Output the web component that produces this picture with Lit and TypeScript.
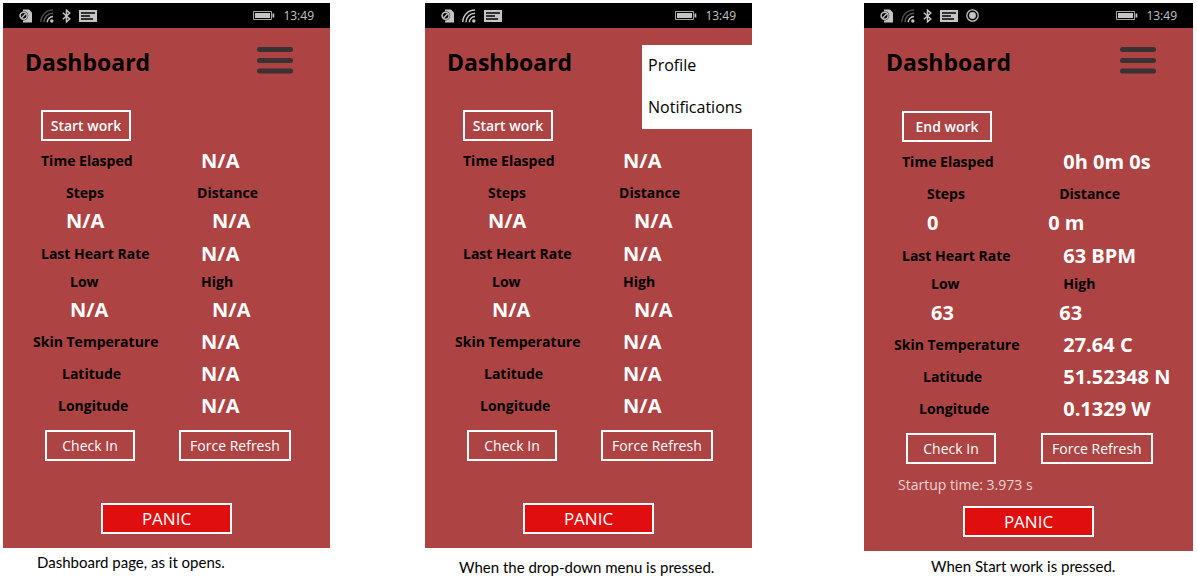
import { LitElement, html, svg, css, nothing } from "lit";
import { customElement, property } from "lit/decorators.js";
import { classMap } from "lit/directives/class-map.js";

interface Cell {
  text: string;
  indent: string;
}

interface Readings {
  elapsed: Cell;
  steps: Cell;
  distance: Cell;
  heart: Cell;
  low: Cell;
  high: Cell;
  skin: Cell;
  latitude: Cell;
  longitude: Cell;
}

const cell = (text: string, indent: string): Cell => ({ text, indent });

const EMPTY: Readings = {
  elapsed: cell("N/A", "r2"),
  steps: cell("N/A", "l4"),
  distance: cell("N/A", "r3"),
  heart: cell("N/A", "r2"),
  low: cell("N/A", "l5"),
  high: cell("N/A", "r3"),
  skin: cell("N/A", "r2"),
  latitude: cell("N/A", "r2"),
  longitude: cell("N/A", "r2"),
};

const LIVE: Readings = {
  elapsed: cell("0h 0m 0s", "r2"),
  steps: cell("0", "l4"),
  distance: cell("0 m", "r0"),
  heart: cell("63 BPM", "r2"),
  low: cell("63", "l5"),
  high: cell("63", "r1"),
  skin: cell("27.64 C", "r2"),
  latitude: cell("51.52348 N", "r2"),
  longitude: cell("0.1329 W", "r2"),
};

const simIcon = svg`
  <svg width="13" height="14" viewBox="0 0 13 14" aria-hidden="true">
    <path d="M4 .5h6l3 3v10H4z" fill="#c4c4c4"/>
    <circle cx="4.600" cy="6.800" r="4.600" fill="#000"/>
    <circle cx="4.600" cy="6.800" r="3.500" fill="none" stroke="#c4c4c4" stroke-width="1.500"/>
    <path d="M2.500 8.900 6.700 4.700" stroke="#c4c4c4" stroke-width="1.400"/>
  </svg>`;

const wifiIcon = (strong: boolean) => svg`
  <svg width="14" height="14" viewBox="0 0 14 14" fill="none" stroke-width="1.500" aria-hidden="true">
    <path d="M.8 13A12.200 12.200 0 0 1 13 .9" stroke=${strong ? "#c4c4c4" : "#4a4a4a"}/>
    <path d="M4 13.200A9 9 0 0 1 13 4.200" stroke=${strong ? "#c4c4c4" : "#5a5a5a"}/>
    <path d="M7.300 13.200A5.800 5.800 0 0 1 13 7.500" stroke="#c4c4c4"/>
    <circle cx="11.800" cy="12" r="1.700" fill="#c4c4c4"/>
  </svg>`;

const bluetoothIcon = svg`
  <svg width="9" height="14" viewBox="0 0 9 14" fill="none" stroke="#c4c4c4" stroke-width="1.500" aria-hidden="true">
    <path d="M.8 3.800 7.800 10 4.500 12.800V1.200L7.800 4 .8 10.200"/>
  </svg>`;

const messageIcon = svg`
  <svg width="18" height="12" viewBox="0 0 18 12" aria-hidden="true">
    <path d="M0 0h18v12H0z" fill="#c4c4c4"/>
    <path d="M2 3h14M2 6h9M2 9h12" stroke="#000" stroke-width="1.300"/>
  </svg>`;

const recordIcon = svg`
  <svg width="13" height="13" viewBox="0 0 13 13" aria-hidden="true">
    <circle cx="6.500" cy="6.500" r="5.700" fill="none" stroke="#c4c4c4" stroke-width="1.300"/>
    <circle cx="6.500" cy="6.500" r="3.400" fill="#c4c4c4"/>
  </svg>`;

const batteryIcon = svg`
  <svg width="22" height="9" viewBox="0 0 22 9" aria-hidden="true">
    <path d="M.5.5h18v8H.5z" fill="none" stroke="#a8a8a8"/>
    <path d="M2 2h15v5H2z" fill="#c4c4c4"/>
    <path d="M19.500 2.500h1.800v4h-1.800z" fill="#c4c4c4"/>
  </svg>`;

@customElement("phone-dashboard")
export class PhoneDashboard extends LitElement {
  @property({ type: Boolean }) working = false;
  @property({ type: Boolean }) menuOpen = false;
  @property({ type: Boolean }) bluetooth = false;
  @property({ attribute: false }) readings: Readings = EMPTY;

  static styles = css`
    :host {
      display: block;
      font-family: "Open Sans", "Noto Sans", sans-serif;
    }
    .phone {
      --value-row: 28px;
      --top-gap: 14px;
      position: relative;
      display: flex;
      flex-direction: column;
      padding-bottom: 14px;
      background: #ad4343;
      color: #000;
    }
    .phone.working {
      --value-row: 29px;
      --top-gap: 15px;
    }
    .status {
      display: flex;
      align-items: center;
      justify-content: space-between;
      height: 25px;
      padding: 0 16px;
      background: #000;
      color: #c4c4c4;
      font-size: 12px;
    }
    .icons {
      display: flex;
      align-items: center;
      gap: 8px;
    }
    .icons svg {
      display: block;
    }
    .header {
      display: flex;
      align-items: center;
      justify-content: space-between;
      height: 68px;
      padding: 0 37px 0 22px;
    }
    h1 {
      margin: 0;
      font-size: 23px;
      line-height: 32px;
      font-weight: 700;
    }
    button {
      box-sizing: border-box;
      margin: 0;
      padding: 0;
      font: inherit;
      cursor: pointer;
    }
    .burger {
      border: 0;
      background: none;
      padding-bottom: 4px;
    }
    .burger svg {
      display: block;
    }
    .menu {
      position: absolute;
      top: 42px;
      right: 0;
      display: flex;
      flex-direction: column;
      width: 110px;
      background: #fff;
    }
    .menu button {
      height: 42px;
      padding: 0 6px 2px;
      border: 0;
      background: none;
      color: #000;
      font-size: 16px;
      line-height: 24px;
      text-align: left;
      white-space: nowrap;
    }
    .outline {
      height: 31px;
      border: 2px solid #fff;
      background: none;
      color: #fff;
      font-size: 14px;
      white-space: nowrap;
    }
    .short {
      width: 90px;
    }
    .long {
      width: 112px;
    }
    .shift {
      display: flex;
      padding: var(--top-gap) 0 6px 38px;
    }
    .shift .outline {
      font-weight: 600;
    }
    .readings {
      display: flex;
      flex-direction: column;
      gap: 4px;
      margin: 0;
    }
    .row {
      display: grid;
      grid-template-columns: 56% 44%;
      grid-auto-rows: 28px;
      align-items: center;
    }
    .pair {
      grid-template-rows: 28px var(--value-row);
    }
    .heart {
      grid-template-rows: 29px 28px var(--value-row);
    }
    dt,
    dd {
      margin: 0;
      white-space: nowrap;
    }
    dt {
      font-size: 14px;
      line-height: 20px;
      font-weight: 700;
    }
    dd {
      color: #fff;
      font-size: 20px;
      line-height: 28px;
      font-weight: 700;
    }
    .l0 { padding-left: 30px; }
    .l1 { padding-left: 38px; }
    .l2 { padding-left: 55px; }
    .l3 { padding-left: 59px; }
    .l4 { padding-left: 63px; }
    .l5 { padding-left: 67px; }
    .r0 { padding-left: 0; }
    .r1 { padding-left: 11px; }
    .r2 { padding-left: 15px; }
    .r3 { padding-left: 26px; }
    .actions {
      display: grid;
      grid-template-columns: 47% 1fr;
      padding: 10px 0 0 42px;
    }
    .startup {
      height: 22px;
      margin: 10px 0;
      padding-left: 34px;
      color: #ecd5d5;
      font-size: 14px;
      line-height: 22px;
    }
    .panic {
      align-self: center;
      width: 40%;
      height: 31px;
      border: 2px solid #fff;
      background: #e00e0e;
      color: #fff;
      font-size: 17px;
      line-height: 24px;
    }
  `;

  private label(text: string, indent: string) {
    return html`<dt class=${indent}>${text}</dt>`;
  }

  private value(c: Cell) {
    return html`<dd class=${c.indent}>${c.text}</dd>`;
  }

  render() {
    const r = this.readings;
    return html`
      <section class=${classMap({ phone: true, working: this.working })}>
        <div class="status">
          <div class="icons">
            ${simIcon} ${wifiIcon(!this.bluetooth)}
            ${this.bluetooth ? bluetoothIcon : nothing} ${messageIcon}
            ${this.working ? recordIcon : nothing}
          </div>
          <div class="icons">${batteryIcon}<span>13:49</span></div>
        </div>
        <header class="header">
          <h1>Dashboard</h1>
          <button
            class="burger"
            aria-label="Menu"
            aria-expanded=${this.menuOpen}
            @click=${() => (this.menuOpen = !this.menuOpen)}
          >
            <svg width="36" height="27" viewBox="0 0 36 27" stroke="#3a3133" stroke-width="5" stroke-linecap="round">
              <path d="M2.500 2.500h31M2.500 13.500h31M2.500 24h31" />
            </svg>
          </button>
        </header>
        ${this.menuOpen
          ? html`<nav class="menu">
              <button>Profile</button>
              <button>Notifications</button>
            </nav>`
          : nothing}
        <div class="shift">
          <button class="outline short">${this.working ? "End work" : "Start work"}</button>
        </div>
        <dl class="readings">
          <div class="row">${this.label("Time Elasped", "l1")}${this.value(r.elapsed)}</div>
          <div class="row pair">
            ${this.label("Steps", "l4")}${this.label("Distance", "r1")}
            ${this.value(r.steps)}${this.value(r.distance)}
          </div>
          <div class="row heart">
            ${this.label("Last Heart Rate", "l1")}${this.value(r.heart)}
            ${this.label("Low", "l5")}${this.label("High", "r2")}
            ${this.value(r.low)}${this.value(r.high)}
          </div>
          <div class="row">${this.label("Skin Temperature", "l0")}${this.value(r.skin)}</div>
          <div class="row">${this.label("Latitude", "l3")}${this.value(r.latitude)}</div>
          <div class="row">${this.label("Longitude", "l2")}${this.value(r.longitude)}</div>
        </dl>
        <div class="actions">
          <div><button class="outline short">Check In</button></div>
          <div><button class="outline long">Force Refresh</button></div>
        </div>
        <div class="startup">${this.working ? "Startup time: 3.973 s" : nothing}</div>
        <button class="panic">PANIC</button>
      </section>
    `;
  }
}

@customElement("app-root")
export class AppRoot extends LitElement {
  static styles = css`
    :host {
      display: block;
      background: #fff;
    }
    .page {
      display: grid;
      grid-template-columns: 327fr 95fr 327fr 112fr 329fr;
      align-items: start;
      padding: 3px 4px 0 3px;
    }
    figure {
      margin: 0;
    }
    .second {
      grid-column: 3;
    }
    .third {
      grid-column: 5;
    }
    figcaption {
      padding: 10px 0 0 34px;
      color: #000;
      font-family: Lato, sans-serif;
      font-size: 15px;
      line-height: 18px;
      white-space: nowrap;
    }
    .first figcaption {
      padding-top: 5px;
    }
    .third figcaption {
      padding-top: 6px;
      padding-left: 67px;
    }
  `;

  render() {
    return html`
      <main class="page">
        <figure class="first">
          <phone-dashboard .bluetooth=${true} .readings=${EMPTY}></phone-dashboard>
          <figcaption>Dashboard page, as it opens.</figcaption>
        </figure>
        <figure class="second">
          <phone-dashboard .menuOpen=${true} .readings=${EMPTY}></phone-dashboard>
          <figcaption>When the drop-down menu is pressed.</figcaption>
        </figure>
        <figure class="third">
          <phone-dashboard .working=${true} .bluetooth=${true} .readings=${LIVE}></phone-dashboard>
          <figcaption>When Start work is pressed.</figcaption>
        </figure>
      </main>
    `;
  }
}
